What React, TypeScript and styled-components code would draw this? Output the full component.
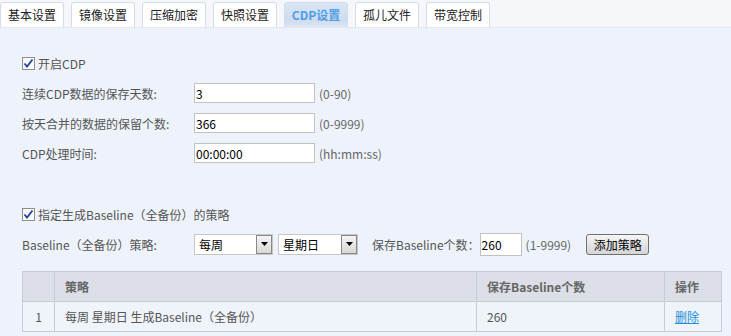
import React from "react";
import styled, { createGlobalStyle } from "styled-components";

const Global = createGlobalStyle`
  html, body { margin: 0; padding: 0; }
  body {
    width: 731px;
    height: 336px;
    overflow: hidden;
    background: #eef3fb;
    font-family: "Noto Sans CJK SC", "Liberation Sans", sans-serif;
    font-size: 12px;
    color: #555;
  }
`;

const Page = styled.div`
  width: 731px;
  height: 336px;
  display: flex;
  flex-direction: column;
  background: #eef3fb;
`;

const TabBar = styled.div`
  height: 26px;
  padding-top: 1px;
  display: flex;
  gap: 7px;
  align-items: flex-end;
  background: #f5f7fb;
  border-bottom: 1px solid #e2e7f0;
`;

const Tab = styled.div<{ $active?: boolean }>`
  width: 64px;
  height: 25px;
  box-sizing: border-box;
  display: flex;
  align-items: center;
  justify-content: center;
  border: 1px solid #d6dce7;
  border-bottom: none;
  border-radius: 3px 3px 0 0;
  font-size: 12px;
  line-height: 1;
  color: ${(p) => (p.$active ? "#4d9de6" : "#222")};
  font-weight: ${(p) => (p.$active ? "bold" : "normal")};
  background: ${(p) =>
    p.$active ? "linear-gradient(#dbe6f5, #cddcf0 70%, #dde7f4)" : "#fff"};
`;

const Content = styled.div`
  padding: 20px 0 0 22px;
  display: flex;
  flex-direction: column;
`;

const Row = styled.div<{ $top?: number }>`
  height: 30px;
  display: flex;
  align-items: center;
  margin-top: ${(p) => p.$top ?? 0}px;
`;

const Box = styled.span`
  width: 13px;
  height: 13px;
  box-sizing: border-box;
  border: 1px solid #8e8f8f;
  background: linear-gradient(135deg, #f4f4f4, #fff);
  display: inline-flex;
  align-items: center;
  justify-content: center;
  margin-right: 3px;
`;

const CheckLabel = styled.span`
  color: #555;
  font-size: 12px;
`;

const Label = styled.span`
  width: 172px;
  flex: none;
  color: #555;
  font-size: 12px;
`;

const TextInput = styled.div<{ $w: number; $h?: number }>`
  width: ${(p) => p.$w}px;
  height: ${(p) => p.$h ?? 20}px;
  box-sizing: border-box;
  border: 1px solid #c2c2c2;
  background: #fff;
  color: #000;
  font-size: 12px;
  display: flex;
  align-items: center;
  padding-left: 1px;
`;

const Hint = styled.span<{ $ml?: number }>`
  margin-left: ${(p) => p.$ml ?? 4}px;
  color: #666;
  font-size: 12px;
`;

const Select = styled.div<{ $w: number; $ml?: number }>`
  width: ${(p) => p.$w}px;
  height: 21px;
  box-sizing: border-box;
  border: 1px solid #c6c6c6;
  background: #fff;
  display: flex;
  align-items: center;
  justify-content: space-between;
  margin-left: ${(p) => p.$ml ?? 0}px;
  color: #000;
  font-size: 12px;
  padding-left: 4px;
`;

const Arrow = styled.span`
  width: 16px;
  height: 19px;
  box-sizing: border-box;
  border: 1px solid #888;
  background: linear-gradient(#f4f4f4, #d8d8d8);
  display: flex;
  align-items: center;
  justify-content: center;
`;

const Inline = styled.span<{ $ml?: number }>`
  margin-left: ${(p) => p.$ml ?? 0}px;
  color: #555;
  font-size: 12px;
`;

const Button = styled.div`
  margin-left: 15px;
  width: 63px;
  height: 21px;
  box-sizing: border-box;
  border: 1px solid #707070;
  border-radius: 3px;
  background: linear-gradient(#f6f6f6, #e3e3e3 50%, #d6d6d6);
  color: #000;
  font-size: 12px;
  display: flex;
  align-items: center;
  justify-content: center;
`;

const Table = styled.table`
  margin-top: 12px;
  width: 700px;
  border-collapse: collapse;
  font-size: 12px;
  color: #555;
`;

const Th = styled.th<{ $w?: number }>`
  height: 29px;
  ${(p) => (p.$w ? `width: ${p.$w}px;` : "")}
  background: #dcdfe7;
  border: 1px solid #c8ccd4;
  text-align: left;
  padding: 0 0 0 10px;
  font-weight: bold;
  color: #666;
`;

const Td = styled.td<{ $center?: boolean }>`
  height: 29px;
  border: 1px solid #c8ccd4;
  padding: 0 0 0 ${(p) => (p.$center ? 0 : 10)}px;
  text-align: ${(p) => (p.$center ? "center" : "left")};
  background: #eff3fa;
`;

const Link = styled.a`
  color: #1b8fd6;
  text-decoration: underline;
`;

const Check = () => (
  <Box>
    <svg width="11" height="11" viewBox="0 0 11 11">
      <path d="M1.5 5.5 L4 8.5 L9.5 1.5" fill="none" stroke="#23409a" strokeWidth="1.8" />
    </svg>
  </Box>
);

const Tri = () => (
  <svg width="7" height="4" viewBox="0 0 7 4">
    <path d="M0 0 H7 L3.5 4 Z" fill="#000" />
  </svg>
);

const tabs = ["基本设置", "镜像设置", "压缩加密", "快照设置", "CDP设置", "孤儿文件", "带宽控制"];

export default function App() {
  return (
    <>
      <Global />
      <Page>
        <TabBar>
          {tabs.map((t) => (
            <Tab key={t} $active={t === "CDP设置"}>
              {t}
            </Tab>
          ))}
        </TabBar>
        <Content>
          <Row>
            <Check />
            <CheckLabel>开启CDP</CheckLabel>
          </Row>
          <Row>
            <Label>连续CDP数据的保存天数:</Label>
            <TextInput $w={121}>3</TextInput>
            <Hint>(0-90)</Hint>
          </Row>
          <Row>
            <Label>按天合并的数据的保留个数:</Label>
            <TextInput $w={121}>366</TextInput>
            <Hint>(0-9999)</Hint>
          </Row>
          <Row>
            <Label>CDP处理时间:</Label>
            <TextInput $w={121}>00:00:00</TextInput>
            <Hint>(hh:mm:ss)</Hint>
          </Row>
          <Row $top={31}>
            <Check />
            <CheckLabel>指定生成Baseline（全备份）的策略</CheckLabel>
          </Row>
          <Row>
            <Label>Baseline（全备份）策略:</Label>
            <Select $w={79}>
              每周
              <Arrow>
                <Tri />
              </Arrow>
            </Select>
            <Select $w={80} $ml={5}>
              星期日
              <Arrow>
                <Tri />
              </Arrow>
            </Select>
            <Inline $ml={14}>保存Baseline个数：</Inline>
            <TextInput $w={42} $h={23}>260</TextInput>
            <Hint>(1-9999)</Hint>
            <Button>添加策略</Button>
          </Row>
          <Table>
            <thead>
              <tr>
                <Th $w={21}></Th>
                <Th $w={411}>策略</Th>
                <Th $w={177}>保存Baseline个数</Th>
                <Th>操作</Th>
              </tr>
            </thead>
            <tbody>
              <tr>
                <Td $center>1</Td>
                <Td>每周 星期日 生成Baseline（全备份）</Td>
                <Td>260</Td>
                <Td>
                  <Link>删除</Link>
                </Td>
              </tr>
            </tbody>
          </Table>
        </Content>
      </Page>
    </>
  );
}
